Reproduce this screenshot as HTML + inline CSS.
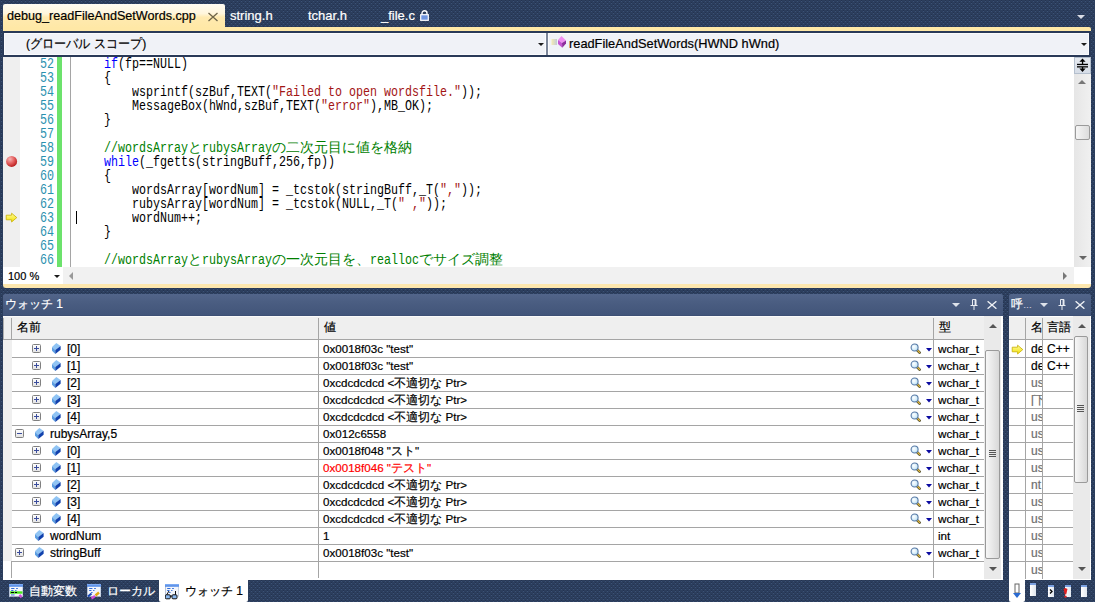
<!DOCTYPE html>
<html><head><meta charset="utf-8"><style>
*{box-sizing:border-box;margin:0;padding:0}
html,body{width:1095px;height:602px;overflow:hidden}
body{position:relative;font-family:"Liberation Sans",sans-serif;font-size:12px;color:#000;
 background-color:#293955;}
.a{position:absolute}
.t{position:absolute;white-space:pre;line-height:1;-webkit-text-stroke:0.2px currentColor}
.code{font-family:"Liberation Mono",monospace;font-size:12.6px;letter-spacing:-0.56px}
.cj{display:inline-block;width:14px;font-family:"Liberation Sans",sans-serif;font-size:12px;letter-spacing:0;text-align:center}
.kw{color:#0000ff}.st{color:#a31515}.cm{color:#008000}
.ln{color:#2b91af}
</style></head><body>
<svg class="a" style="left:0;top:0" width="1095" height="602"><defs><pattern id="dots" width="4" height="4" patternUnits="userSpaceOnUse"><rect width="4" height="4" fill="#2c3e5d"/><rect x="1" y="1" width="1" height="1" fill="#3b5276"/><rect x="3" y="3" width="1" height="1" fill="#3b5276"/><rect x="1" y="0" width="1" height="1" fill="#243350"/><rect x="3" y="2" width="1" height="1" fill="#243350"/></pattern></defs><rect width="1095" height="602" fill="url(#dots)"/></svg>
<div class="a" style="left:3px;top:4px;width:222px;height:24px;border-radius:2px 2px 0 0;background:linear-gradient(#fffcf3 0%,#fff6dc 40%,#ffeab0 55%,#ffe8a6 100%)"></div>
<div class="t" style="left:7px;top:9.6px;font-size:12.6px;color:#000">debug_readFileAndSetWords.cpp</div>
<svg class="a" style="left:207px;top:12px" width="12" height="10" viewBox="0 0 12 10"><path d="M1.5 1 L10.5 9 M10.5 1 L1.5 9" stroke="#6e6448" stroke-width="1.3"/></svg>
<div class="t" style="left:230px;top:9px;font-size:13px;color:#fff">string.h</div>
<div class="t" style="left:308px;top:9px;font-size:13px;color:#fff">tchar.h</div>
<div class="t" style="left:381px;top:9px;font-size:13px;color:#fff">_file.c</div>
<svg class="a" style="left:420px;top:10px" width="9" height="11" viewBox="0 0 9 11"><path d="M2 5 V3.2 A2.5 2.5 0 0 1 7 3.2 V5" fill="none" stroke="#fff" stroke-width="1.4"/><rect x="0.7" y="4.7" width="7.6" height="5.6" fill="#6f95e0" stroke="#fff" stroke-width="1.2"/></svg>
<svg class="a" style="left:1077px;top:15px" width="8" height="4" viewBox="0 0 8 4"><path d="M0 0 H8 L4 4 Z" fill="#d9dde6"/></svg>
<div class="a" style="left:3px;top:27px;width:1088px;height:4px;background:#ffe8a6;border-radius:0 2px 0 0"></div>
<div class="a" style="left:3px;top:31px;width:1088px;height:26px;background:#2a3a58"></div>
<div class="a" style="left:4px;top:33px;width:542px;height:22px;background:#f0f2f7;border:1px solid #fafbfd"></div>
<div class="a" style="left:548px;top:33px;width:541px;height:22px;background:#f0f2f7;border:1px solid #fafbfd"></div>
<div class="a" style="left:546px;top:33px;width:2px;height:22px;background:#7c8699"></div>
<div class="t" style="left:26px;top:36.5px;font-size:13px;color:#000;transform:scaleX(0.93);transform-origin:0 0">(グローバル スコープ)</div>
<svg class="a" style="left:538px;top:43px" width="6" height="3" viewBox="0 0 6 3"><path d="M0 0 H6 L3 3 Z" fill="#1b1b1b"/></svg>
<svg class="a" style="left:1081px;top:43px" width="6" height="3" viewBox="0 0 6 3"><path d="M0 0 H6 L3 3 Z" fill="#1b1b1b"/></svg>
<svg class="a" style="left:550px;top:35px" width="18" height="14" viewBox="0 0 18 14"><defs><linearGradient id="fb" x1="0" x2="1"><stop offset="0" stop-color="#f4ecb4"/><stop offset="1" stop-color="#c4cad6"/></linearGradient></defs><rect x="1.5" y="4" width="5.5" height="6" fill="url(#fb)"/><path d="M11.5 1 L16 5.6 L12 8 L8 5 Z" fill="#f08ef2"/><path d="M8 5 L12 8 L12.3 12.8 L8 8.9 Z" fill="#c453d2"/><path d="M12 8 L16 5.6 L16 8.6 L12.3 12.8 Z" fill="#8b2c9c"/></svg>
<div class="t" style="left:569px;top:38px;font-size:12.8px;color:#000">readFileAndSetWords(HWND hWnd)</div>
<div class="a" style="left:3px;top:57px;width:1071px;height:210px;background:#fff"></div>
<div class="a" style="left:3px;top:57px;width:17px;height:210px;background:#efefef"></div>
<div class="a" style="left:57px;top:57px;width:5px;height:210px;background:#6ce26c"></div>
<div class="a" style="left:70px;top:57px;width:1px;height:210px;background:#a5a5a5"></div>
<div class="t" style="left:40.00px;top:57px;height:14px;font-family:Liberation Mono;font-size:14.5px;transform:scaleX(0.8046);transform-origin:0 0;color:#2b91af;-webkit-text-stroke:0">52</div>
<div class="t" style="left:104px;top:57px;font-family:Liberation Mono;font-size:14.5px;transform:scaleX(0.8046);transform-origin:0 0;color:#0000ff;-webkit-text-stroke:0">if</div>
<div class="t" style="left:118px;top:57px;font-family:Liberation Mono;font-size:14.5px;transform:scaleX(0.8046);transform-origin:0 0;color:#000;-webkit-text-stroke:0">(fp==NULL)</div>
<div class="t" style="left:40.00px;top:71px;height:14px;font-family:Liberation Mono;font-size:14.5px;transform:scaleX(0.8046);transform-origin:0 0;color:#2b91af;-webkit-text-stroke:0">53</div>
<div class="t" style="left:104px;top:71px;font-family:Liberation Mono;font-size:14.5px;transform:scaleX(0.8046);transform-origin:0 0;color:#000;-webkit-text-stroke:0">{</div>
<div class="t" style="left:40.00px;top:85px;height:14px;font-family:Liberation Mono;font-size:14.5px;transform:scaleX(0.8046);transform-origin:0 0;color:#2b91af;-webkit-text-stroke:0">54</div>
<div class="t" style="left:132px;top:85px;font-family:Liberation Mono;font-size:14.5px;transform:scaleX(0.8046);transform-origin:0 0;color:#000;-webkit-text-stroke:0">wsprintf(szBuf,TEXT(</div>
<div class="t" style="left:272px;top:85px;font-family:Liberation Mono;font-size:14.5px;transform:scaleX(0.8046);transform-origin:0 0;color:#a31515;-webkit-text-stroke:0">&quot;Failed to open wordsfile.&quot;</div>
<div class="t" style="left:461px;top:85px;font-family:Liberation Mono;font-size:14.5px;transform:scaleX(0.8046);transform-origin:0 0;color:#000;-webkit-text-stroke:0">));</div>
<div class="t" style="left:40.00px;top:99px;height:14px;font-family:Liberation Mono;font-size:14.5px;transform:scaleX(0.8046);transform-origin:0 0;color:#2b91af;-webkit-text-stroke:0">55</div>
<div class="t" style="left:132px;top:99px;font-family:Liberation Mono;font-size:14.5px;transform:scaleX(0.8046);transform-origin:0 0;color:#000;-webkit-text-stroke:0">MessageBox(hWnd,szBuf,TEXT(</div>
<div class="t" style="left:321px;top:99px;font-family:Liberation Mono;font-size:14.5px;transform:scaleX(0.8046);transform-origin:0 0;color:#a31515;-webkit-text-stroke:0">&quot;error&quot;</div>
<div class="t" style="left:370px;top:99px;font-family:Liberation Mono;font-size:14.5px;transform:scaleX(0.8046);transform-origin:0 0;color:#000;-webkit-text-stroke:0">),MB_OK);</div>
<div class="t" style="left:40.00px;top:113px;height:14px;font-family:Liberation Mono;font-size:14.5px;transform:scaleX(0.8046);transform-origin:0 0;color:#2b91af;-webkit-text-stroke:0">56</div>
<div class="t" style="left:104px;top:113px;font-family:Liberation Mono;font-size:14.5px;transform:scaleX(0.8046);transform-origin:0 0;color:#000;-webkit-text-stroke:0">}</div>
<div class="t" style="left:40.00px;top:127px;height:14px;font-family:Liberation Mono;font-size:14.5px;transform:scaleX(0.8046);transform-origin:0 0;color:#2b91af;-webkit-text-stroke:0">57</div>
<div class="t" style="left:40.00px;top:141px;height:14px;font-family:Liberation Mono;font-size:14.5px;transform:scaleX(0.8046);transform-origin:0 0;color:#2b91af;-webkit-text-stroke:0">58</div>
<div class="t" style="left:104px;top:141px;font-family:Liberation Mono;font-size:14.5px;transform:scaleX(0.8046);transform-origin:0 0;color:#008000;-webkit-text-stroke:0">//wordsArray</div>
<div class="t" style="left:188px;top:141px;width:14px;text-align:center;font-size:13.5px;color:#008000;-webkit-text-stroke:0">と</div>
<div class="t" style="left:202px;top:141px;font-family:Liberation Mono;font-size:14.5px;transform:scaleX(0.8046);transform-origin:0 0;color:#008000;-webkit-text-stroke:0">rubysArray</div>
<div class="t" style="left:272px;top:141px;width:14px;text-align:center;font-size:13.5px;color:#008000;-webkit-text-stroke:0">の</div>
<div class="t" style="left:286px;top:141px;width:14px;text-align:center;font-size:13.5px;color:#008000;-webkit-text-stroke:0">二</div>
<div class="t" style="left:300px;top:141px;width:14px;text-align:center;font-size:13.5px;color:#008000;-webkit-text-stroke:0">次</div>
<div class="t" style="left:314px;top:141px;width:14px;text-align:center;font-size:13.5px;color:#008000;-webkit-text-stroke:0">元</div>
<div class="t" style="left:328px;top:141px;width:14px;text-align:center;font-size:13.5px;color:#008000;-webkit-text-stroke:0">目</div>
<div class="t" style="left:342px;top:141px;width:14px;text-align:center;font-size:13.5px;color:#008000;-webkit-text-stroke:0">に</div>
<div class="t" style="left:356px;top:141px;width:14px;text-align:center;font-size:13.5px;color:#008000;-webkit-text-stroke:0">値</div>
<div class="t" style="left:370px;top:141px;width:14px;text-align:center;font-size:13.5px;color:#008000;-webkit-text-stroke:0">を</div>
<div class="t" style="left:384px;top:141px;width:14px;text-align:center;font-size:13.5px;color:#008000;-webkit-text-stroke:0">格</div>
<div class="t" style="left:398px;top:141px;width:14px;text-align:center;font-size:13.5px;color:#008000;-webkit-text-stroke:0">納</div>
<div class="t" style="left:40.00px;top:155px;height:14px;font-family:Liberation Mono;font-size:14.5px;transform:scaleX(0.8046);transform-origin:0 0;color:#2b91af;-webkit-text-stroke:0">59</div>
<div class="t" style="left:104px;top:155px;font-family:Liberation Mono;font-size:14.5px;transform:scaleX(0.8046);transform-origin:0 0;color:#0000ff;-webkit-text-stroke:0">while</div>
<div class="t" style="left:139px;top:155px;font-family:Liberation Mono;font-size:14.5px;transform:scaleX(0.8046);transform-origin:0 0;color:#000;-webkit-text-stroke:0">(_fgetts(stringBuff,256,fp))</div>
<div class="t" style="left:40.00px;top:169px;height:14px;font-family:Liberation Mono;font-size:14.5px;transform:scaleX(0.8046);transform-origin:0 0;color:#2b91af;-webkit-text-stroke:0">60</div>
<div class="t" style="left:104px;top:169px;font-family:Liberation Mono;font-size:14.5px;transform:scaleX(0.8046);transform-origin:0 0;color:#000;-webkit-text-stroke:0">{</div>
<div class="t" style="left:40.00px;top:183px;height:14px;font-family:Liberation Mono;font-size:14.5px;transform:scaleX(0.8046);transform-origin:0 0;color:#2b91af;-webkit-text-stroke:0">61</div>
<div class="t" style="left:132px;top:183px;font-family:Liberation Mono;font-size:14.5px;transform:scaleX(0.8046);transform-origin:0 0;color:#000;-webkit-text-stroke:0">wordsArray[wordNum] = _tcstok(stringBuff,_T(</div>
<div class="t" style="left:440px;top:183px;font-family:Liberation Mono;font-size:14.5px;transform:scaleX(0.8046);transform-origin:0 0;color:#a31515;-webkit-text-stroke:0">&quot;,&quot;</div>
<div class="t" style="left:461px;top:183px;font-family:Liberation Mono;font-size:14.5px;transform:scaleX(0.8046);transform-origin:0 0;color:#000;-webkit-text-stroke:0">));</div>
<div class="t" style="left:40.00px;top:197px;height:14px;font-family:Liberation Mono;font-size:14.5px;transform:scaleX(0.8046);transform-origin:0 0;color:#2b91af;-webkit-text-stroke:0">62</div>
<div class="t" style="left:132px;top:197px;font-family:Liberation Mono;font-size:14.5px;transform:scaleX(0.8046);transform-origin:0 0;color:#000;-webkit-text-stroke:0">rubysArray[wordNum] = _tcstok(NULL,_T(</div>
<div class="t" style="left:398px;top:197px;font-family:Liberation Mono;font-size:14.5px;transform:scaleX(0.8046);transform-origin:0 0;color:#a31515;-webkit-text-stroke:0">&quot; ,&quot;</div>
<div class="t" style="left:426px;top:197px;font-family:Liberation Mono;font-size:14.5px;transform:scaleX(0.8046);transform-origin:0 0;color:#000;-webkit-text-stroke:0">));</div>
<div class="t" style="left:40.00px;top:211px;height:14px;font-family:Liberation Mono;font-size:14.5px;transform:scaleX(0.8046);transform-origin:0 0;color:#2b91af;-webkit-text-stroke:0">63</div>
<div class="t" style="left:132px;top:211px;font-family:Liberation Mono;font-size:14.5px;transform:scaleX(0.8046);transform-origin:0 0;color:#000;-webkit-text-stroke:0">wordNum++;</div>
<div class="t" style="left:40.00px;top:225px;height:14px;font-family:Liberation Mono;font-size:14.5px;transform:scaleX(0.8046);transform-origin:0 0;color:#2b91af;-webkit-text-stroke:0">64</div>
<div class="t" style="left:104px;top:225px;font-family:Liberation Mono;font-size:14.5px;transform:scaleX(0.8046);transform-origin:0 0;color:#000;-webkit-text-stroke:0">}</div>
<div class="t" style="left:40.00px;top:239px;height:14px;font-family:Liberation Mono;font-size:14.5px;transform:scaleX(0.8046);transform-origin:0 0;color:#2b91af;-webkit-text-stroke:0">65</div>
<div class="t" style="left:40.00px;top:253px;height:14px;font-family:Liberation Mono;font-size:14.5px;transform:scaleX(0.8046);transform-origin:0 0;color:#2b91af;-webkit-text-stroke:0">66</div>
<div class="t" style="left:104px;top:253px;font-family:Liberation Mono;font-size:14.5px;transform:scaleX(0.8046);transform-origin:0 0;color:#008000;-webkit-text-stroke:0">//wordsArray</div>
<div class="t" style="left:188px;top:253px;width:14px;text-align:center;font-size:13.5px;color:#008000;-webkit-text-stroke:0">と</div>
<div class="t" style="left:202px;top:253px;font-family:Liberation Mono;font-size:14.5px;transform:scaleX(0.8046);transform-origin:0 0;color:#008000;-webkit-text-stroke:0">rubysArray</div>
<div class="t" style="left:272px;top:253px;width:14px;text-align:center;font-size:13.5px;color:#008000;-webkit-text-stroke:0">の</div>
<div class="t" style="left:286px;top:253px;width:14px;text-align:center;font-size:13.5px;color:#008000;-webkit-text-stroke:0">一</div>
<div class="t" style="left:300px;top:253px;width:14px;text-align:center;font-size:13.5px;color:#008000;-webkit-text-stroke:0">次</div>
<div class="t" style="left:314px;top:253px;width:14px;text-align:center;font-size:13.5px;color:#008000;-webkit-text-stroke:0">元</div>
<div class="t" style="left:328px;top:253px;width:14px;text-align:center;font-size:13.5px;color:#008000;-webkit-text-stroke:0">目</div>
<div class="t" style="left:342px;top:253px;width:14px;text-align:center;font-size:13.5px;color:#008000;-webkit-text-stroke:0">を</div>
<div class="t" style="left:356px;top:253px;width:14px;text-align:center;font-size:13.5px;color:#008000;-webkit-text-stroke:0">、</div>
<div class="t" style="left:370px;top:253px;font-family:Liberation Mono;font-size:14.5px;transform:scaleX(0.8046);transform-origin:0 0;color:#008000;-webkit-text-stroke:0">realloc</div>
<div class="t" style="left:419px;top:253px;width:14px;text-align:center;font-size:13.5px;color:#008000;-webkit-text-stroke:0">で</div>
<div class="t" style="left:433px;top:253px;width:14px;text-align:center;font-size:13.5px;color:#008000;-webkit-text-stroke:0">サ</div>
<div class="t" style="left:447px;top:253px;width:14px;text-align:center;font-size:13.5px;color:#008000;-webkit-text-stroke:0">イ</div>
<div class="t" style="left:461px;top:253px;width:14px;text-align:center;font-size:13.5px;color:#008000;-webkit-text-stroke:0">ズ</div>
<div class="t" style="left:475px;top:253px;width:14px;text-align:center;font-size:13.5px;color:#008000;-webkit-text-stroke:0">調</div>
<div class="t" style="left:489px;top:253px;width:14px;text-align:center;font-size:13.5px;color:#008000;-webkit-text-stroke:0">整</div>
<svg class="a" style="left:5px;top:155px" width="13" height="13" viewBox="0 0 13 13"><defs><radialGradient id="bp" cx="0.35" cy="0.3" r="0.75"><stop offset="0" stop-color="#f6b4b4"/><stop offset="0.55" stop-color="#e25a5a"/><stop offset="1" stop-color="#b51c1c"/></radialGradient></defs><circle cx="6.6" cy="6.4" r="5.5" fill="url(#bp)"/></svg>
<svg class="a" style="left:5px;top:211px" width="13" height="12" viewBox="0 0 13 12"><defs><linearGradient id="ar" x1="0" y1="0" x2="0" y2="1"><stop offset="0" stop-color="#fffca0"/><stop offset="1" stop-color="#f2e000"/></linearGradient></defs><path d="M1.2 4.2 H6.6 V2.2 L11.8 6.6 L6.6 11 V8.8 H1.2 Z" fill="url(#ar)" stroke="#c8b000" stroke-width="0.8" stroke-linejoin="round"/></svg>
<div class="a" style="left:76px;top:211px;width:1px;height:13px;background:#000"></div>
<div class="a" style="left:1074px;top:57px;width:17px;height:210px;background:linear-gradient(90deg,#e6e6e6,#f0f0f0)"></div>
<svg class="a" style="left:1079px;top:256px" width="8" height="4" viewBox="0 0 8 4"><path d="M0 0 H8 L4 4 Z" fill="#666"/></svg>
<div class="a" style="left:1074px;top:57px;width:17px;height:17px;background:linear-gradient(#e6eaf0,#d6dde7);border:1px solid #b4bfcd"></div>
<svg class="a" style="left:1075px;top:58px" width="15" height="15" viewBox="0 0 15 15"><path d="M7.5 0.6 L10.6 3.8 H4.4 Z M7.5 14 L10.6 10.6 H4.4 Z" fill="#000"/><rect x="2" y="5.8" width="11" height="1.3" fill="#000"/><rect x="2" y="8.2" width="11" height="1.3" fill="#000"/><rect x="6.9" y="3" width="1.3" height="3" fill="#000"/><rect x="6.9" y="9" width="1.3" height="2.5" fill="#000"/></svg>
<svg class="a" style="left:1078px;top:80px" width="8" height="4" viewBox="0 0 8 4"><path d="M4 0 L8 4 H0 Z" fill="#777"/></svg>
<div class="a" style="left:1075px;top:125px;width:15px;height:15px;border:1px solid #9a9a9a;border-radius:2px;background:linear-gradient(90deg,#f5f5f5,#dcdcdc)"></div>
<div class="a" style="left:3px;top:267px;width:1071px;height:17px;background:#f1f1f1"></div>
<div class="a" style="left:3px;top:267px;width:60px;height:17px;background:#fff"></div>
<div class="t" style="left:8px;top:271px;font-size:11px">100 %</div>
<svg class="a" style="left:54px;top:275px" width="6" height="3" viewBox="0 0 6 3"><path d="M0 0 H6 L3 3 Z" fill="#1b1b1b"/></svg>
<svg class="a" style="left:69px;top:272px" width="4" height="8" viewBox="0 0 4 8"><path d="M4 0 V8 L0 4 Z" fill="#999"/></svg>
<svg class="a" style="left:1063px;top:272px" width="4" height="8" viewBox="0 0 4 8"><path d="M0 0 V8 L4 4 Z" fill="#777"/></svg>
<div class="a" style="left:1074px;top:267px;width:17px;height:17px;background:#fff"></div>
<div class="a" style="left:3px;top:284px;width:1088px;height:4px;background:#fde7ae;border-radius:0 0 3px 3px"></div>
<div class="a" style="left:3px;top:294px;width:1000px;height:22px;border-radius:2px 2px 0 0;background:linear-gradient(#52658a 0%,#4a5d81 40%,#42557a 95%,#3a4c70 100%)"></div>
<div class="t" style="left:5px;top:298px;font-size:12px;color:#fff">ウォッチ 1</div>
<svg class="a" style="left:952px;top:303px" width="8" height="4" viewBox="0 0 8 4"><path d="M0 0 H8 L4 4 Z" fill="#dde2ea"/></svg>
<svg class="a" style="left:970px;top:299px" width="8" height="11" viewBox="0 0 8 11"><path d="M2.5 0.5 H6 V6 M2.5 0.5 V6" fill="none" stroke="#e8ecf2" stroke-width="1"/><rect x="4.6" y="0.5" width="1.4" height="5.5" fill="#e8ecf2"/><rect x="0.5" y="6" width="7" height="1" fill="#e8ecf2"/><rect x="3.5" y="7" width="1" height="4" fill="#e8ecf2"/></svg>
<svg class="a" style="left:987px;top:301px" width="10" height="8" viewBox="0 0 10 8"><path d="M0.6 0.3 L9.4 7.7 M9.4 0.3 L0.6 7.7" stroke="#eef1f5" stroke-width="1.4"/></svg>
<div class="a" style="left:3px;top:316px;width:1000px;height:264px;background:#fff"></div>
<div class="a" style="left:3px;top:317px;width:981px;height:23px;background:#efefef;border-bottom:1px solid #a5a5a5"></div>
<div class="a" style="left:3px;top:316px;width:981px;height:1px;background:#fafafa"></div>
<div class="a" style="left:11px;top:318px;width:1px;height:21px;background:#a5a5a5"></div>
<div class="a" style="left:3px;top:318px;width:1px;height:21px;background:#b0b0b0"></div>
<div class="a" style="left:318px;top:318px;width:1px;height:21px;background:#a5a5a5"></div>
<div class="a" style="left:933px;top:318px;width:1px;height:21px;background:#a5a5a5"></div>
<div class="t" style="left:17px;top:321px;font-size:12px">名前</div>
<div class="t" style="left:324px;top:321px;font-size:12px">値</div>
<div class="t" style="left:939px;top:321px;font-size:12px">型</div>
<div class="a" style="left:3px;top:340px;width:9px;height:17px;background:#efefef"></div>
<div class="a" style="left:12px;top:357px;width:972px;height:1px;background:#a5a5a5"></div>
<svg class="a" style="left:32px;top:344px" width="9" height="9" viewBox="0 0 9 9"><defs><linearGradient id="bg32_344" x1="0" y1="0" x2="0" y2="1"><stop offset="0" stop-color="#ffffff"/><stop offset="1" stop-color="#e2e2e2"/></linearGradient></defs><rect x="0.5" y="0.5" width="8" height="8" rx="1" fill="url(#bg32_344)" stroke="#808080"/><rect x="2" y="4" width="5" height="1" fill="#3a4c9c"/><rect x="4" y="2" width="1" height="5" fill="#3a4c9c"/></svg>
<svg class="a" style="left:52px;top:343px" width="9" height="11" viewBox="0 0 9 11"><path d="M4.3 0 L8.6 3 L3.3 7 L0 4 Z" fill="#90c4f4"/><path d="M0 4 L3.3 7 L3.3 11 L0 7.8 Z" fill="#5b9ee2"/><path d="M3.3 7 L8.6 3 L8.6 6.8 L3.3 11 Z" fill="#1041ad"/></svg>
<div class="t" style="left:67px;top:343px;font-size:12px">[0]</div>
<div class="t" style="left:323px;top:343px;font-size:11.6px;color:#000">0x0018f03c &quot;test&quot;</div>
<svg class="a" style="left:910px;top:343px" width="11" height="11" viewBox="0 0 11 11"><defs><radialGradient id="lg" cx="0.4" cy="0.4" r="0.6"><stop offset="0" stop-color="#ffffff"/><stop offset="1" stop-color="#bfe4f8"/></radialGradient></defs><path d="M6.6 6.6 L9.6 9.6" stroke="#3a3a20" stroke-width="2.6" stroke-linecap="round"/><path d="M6.6 6.6 L9.6 9.6" stroke="#e0b840" stroke-width="1.4" stroke-linecap="round"/><circle cx="4.6" cy="4.5" r="3.5" fill="url(#lg)" stroke="#587aa6" stroke-width="1.1"/></svg>
<svg class="a" style="left:926px;top:348px" width="6" height="4" viewBox="0 0 6 4"><path d="M0 0 H6 L3 3.5 Z" fill="#0a0aa0"/></svg>
<div class="t" style="left:938px;top:343px;font-size:11.7px;width:46px;overflow:hidden">wchar_t</div>
<div class="a" style="left:3px;top:357px;width:9px;height:17px;background:#efefef"></div>
<div class="a" style="left:12px;top:374px;width:972px;height:1px;background:#a5a5a5"></div>
<svg class="a" style="left:32px;top:361px" width="9" height="9" viewBox="0 0 9 9"><defs><linearGradient id="bg32_361" x1="0" y1="0" x2="0" y2="1"><stop offset="0" stop-color="#ffffff"/><stop offset="1" stop-color="#e2e2e2"/></linearGradient></defs><rect x="0.5" y="0.5" width="8" height="8" rx="1" fill="url(#bg32_361)" stroke="#808080"/><rect x="2" y="4" width="5" height="1" fill="#3a4c9c"/><rect x="4" y="2" width="1" height="5" fill="#3a4c9c"/></svg>
<svg class="a" style="left:52px;top:360px" width="9" height="11" viewBox="0 0 9 11"><path d="M4.3 0 L8.6 3 L3.3 7 L0 4 Z" fill="#90c4f4"/><path d="M0 4 L3.3 7 L3.3 11 L0 7.8 Z" fill="#5b9ee2"/><path d="M3.3 7 L8.6 3 L8.6 6.8 L3.3 11 Z" fill="#1041ad"/></svg>
<div class="t" style="left:67px;top:360px;font-size:12px">[1]</div>
<div class="t" style="left:323px;top:360px;font-size:11.6px;color:#000">0x0018f03c &quot;test&quot;</div>
<svg class="a" style="left:910px;top:360px" width="11" height="11" viewBox="0 0 11 11"><defs><radialGradient id="lg" cx="0.4" cy="0.4" r="0.6"><stop offset="0" stop-color="#ffffff"/><stop offset="1" stop-color="#bfe4f8"/></radialGradient></defs><path d="M6.6 6.6 L9.6 9.6" stroke="#3a3a20" stroke-width="2.6" stroke-linecap="round"/><path d="M6.6 6.6 L9.6 9.6" stroke="#e0b840" stroke-width="1.4" stroke-linecap="round"/><circle cx="4.6" cy="4.5" r="3.5" fill="url(#lg)" stroke="#587aa6" stroke-width="1.1"/></svg>
<svg class="a" style="left:926px;top:365px" width="6" height="4" viewBox="0 0 6 4"><path d="M0 0 H6 L3 3.5 Z" fill="#0a0aa0"/></svg>
<div class="t" style="left:938px;top:360px;font-size:11.7px;width:46px;overflow:hidden">wchar_t</div>
<div class="a" style="left:3px;top:374px;width:9px;height:17px;background:#efefef"></div>
<div class="a" style="left:12px;top:391px;width:972px;height:1px;background:#a5a5a5"></div>
<svg class="a" style="left:32px;top:378px" width="9" height="9" viewBox="0 0 9 9"><defs><linearGradient id="bg32_378" x1="0" y1="0" x2="0" y2="1"><stop offset="0" stop-color="#ffffff"/><stop offset="1" stop-color="#e2e2e2"/></linearGradient></defs><rect x="0.5" y="0.5" width="8" height="8" rx="1" fill="url(#bg32_378)" stroke="#808080"/><rect x="2" y="4" width="5" height="1" fill="#3a4c9c"/><rect x="4" y="2" width="1" height="5" fill="#3a4c9c"/></svg>
<svg class="a" style="left:52px;top:377px" width="9" height="11" viewBox="0 0 9 11"><path d="M4.3 0 L8.6 3 L3.3 7 L0 4 Z" fill="#90c4f4"/><path d="M0 4 L3.3 7 L3.3 11 L0 7.8 Z" fill="#5b9ee2"/><path d="M3.3 7 L8.6 3 L8.6 6.8 L3.3 11 Z" fill="#1041ad"/></svg>
<div class="t" style="left:67px;top:377px;font-size:12px">[2]</div>
<div class="t" style="left:323px;top:377px;font-size:11.6px;color:#000">0xcdcdcdcd &lt;不適切な Ptr&gt;</div>
<svg class="a" style="left:910px;top:377px" width="11" height="11" viewBox="0 0 11 11"><defs><radialGradient id="lg" cx="0.4" cy="0.4" r="0.6"><stop offset="0" stop-color="#ffffff"/><stop offset="1" stop-color="#bfe4f8"/></radialGradient></defs><path d="M6.6 6.6 L9.6 9.6" stroke="#3a3a20" stroke-width="2.6" stroke-linecap="round"/><path d="M6.6 6.6 L9.6 9.6" stroke="#e0b840" stroke-width="1.4" stroke-linecap="round"/><circle cx="4.6" cy="4.5" r="3.5" fill="url(#lg)" stroke="#587aa6" stroke-width="1.1"/></svg>
<svg class="a" style="left:926px;top:382px" width="6" height="4" viewBox="0 0 6 4"><path d="M0 0 H6 L3 3.5 Z" fill="#0a0aa0"/></svg>
<div class="t" style="left:938px;top:377px;font-size:11.7px;width:46px;overflow:hidden">wchar_t</div>
<div class="a" style="left:3px;top:391px;width:9px;height:17px;background:#efefef"></div>
<div class="a" style="left:12px;top:408px;width:972px;height:1px;background:#a5a5a5"></div>
<svg class="a" style="left:32px;top:395px" width="9" height="9" viewBox="0 0 9 9"><defs><linearGradient id="bg32_395" x1="0" y1="0" x2="0" y2="1"><stop offset="0" stop-color="#ffffff"/><stop offset="1" stop-color="#e2e2e2"/></linearGradient></defs><rect x="0.5" y="0.5" width="8" height="8" rx="1" fill="url(#bg32_395)" stroke="#808080"/><rect x="2" y="4" width="5" height="1" fill="#3a4c9c"/><rect x="4" y="2" width="1" height="5" fill="#3a4c9c"/></svg>
<svg class="a" style="left:52px;top:394px" width="9" height="11" viewBox="0 0 9 11"><path d="M4.3 0 L8.6 3 L3.3 7 L0 4 Z" fill="#90c4f4"/><path d="M0 4 L3.3 7 L3.3 11 L0 7.8 Z" fill="#5b9ee2"/><path d="M3.3 7 L8.6 3 L8.6 6.8 L3.3 11 Z" fill="#1041ad"/></svg>
<div class="t" style="left:67px;top:394px;font-size:12px">[3]</div>
<div class="t" style="left:323px;top:394px;font-size:11.6px;color:#000">0xcdcdcdcd &lt;不適切な Ptr&gt;</div>
<svg class="a" style="left:910px;top:394px" width="11" height="11" viewBox="0 0 11 11"><defs><radialGradient id="lg" cx="0.4" cy="0.4" r="0.6"><stop offset="0" stop-color="#ffffff"/><stop offset="1" stop-color="#bfe4f8"/></radialGradient></defs><path d="M6.6 6.6 L9.6 9.6" stroke="#3a3a20" stroke-width="2.6" stroke-linecap="round"/><path d="M6.6 6.6 L9.6 9.6" stroke="#e0b840" stroke-width="1.4" stroke-linecap="round"/><circle cx="4.6" cy="4.5" r="3.5" fill="url(#lg)" stroke="#587aa6" stroke-width="1.1"/></svg>
<svg class="a" style="left:926px;top:399px" width="6" height="4" viewBox="0 0 6 4"><path d="M0 0 H6 L3 3.5 Z" fill="#0a0aa0"/></svg>
<div class="t" style="left:938px;top:394px;font-size:11.7px;width:46px;overflow:hidden">wchar_t</div>
<div class="a" style="left:3px;top:408px;width:9px;height:17px;background:#efefef"></div>
<div class="a" style="left:12px;top:425px;width:972px;height:1px;background:#a5a5a5"></div>
<svg class="a" style="left:32px;top:412px" width="9" height="9" viewBox="0 0 9 9"><defs><linearGradient id="bg32_412" x1="0" y1="0" x2="0" y2="1"><stop offset="0" stop-color="#ffffff"/><stop offset="1" stop-color="#e2e2e2"/></linearGradient></defs><rect x="0.5" y="0.5" width="8" height="8" rx="1" fill="url(#bg32_412)" stroke="#808080"/><rect x="2" y="4" width="5" height="1" fill="#3a4c9c"/><rect x="4" y="2" width="1" height="5" fill="#3a4c9c"/></svg>
<svg class="a" style="left:52px;top:411px" width="9" height="11" viewBox="0 0 9 11"><path d="M4.3 0 L8.6 3 L3.3 7 L0 4 Z" fill="#90c4f4"/><path d="M0 4 L3.3 7 L3.3 11 L0 7.8 Z" fill="#5b9ee2"/><path d="M3.3 7 L8.6 3 L8.6 6.8 L3.3 11 Z" fill="#1041ad"/></svg>
<div class="t" style="left:67px;top:411px;font-size:12px">[4]</div>
<div class="t" style="left:323px;top:411px;font-size:11.6px;color:#000">0xcdcdcdcd &lt;不適切な Ptr&gt;</div>
<svg class="a" style="left:910px;top:411px" width="11" height="11" viewBox="0 0 11 11"><defs><radialGradient id="lg" cx="0.4" cy="0.4" r="0.6"><stop offset="0" stop-color="#ffffff"/><stop offset="1" stop-color="#bfe4f8"/></radialGradient></defs><path d="M6.6 6.6 L9.6 9.6" stroke="#3a3a20" stroke-width="2.6" stroke-linecap="round"/><path d="M6.6 6.6 L9.6 9.6" stroke="#e0b840" stroke-width="1.4" stroke-linecap="round"/><circle cx="4.6" cy="4.5" r="3.5" fill="url(#lg)" stroke="#587aa6" stroke-width="1.1"/></svg>
<svg class="a" style="left:926px;top:416px" width="6" height="4" viewBox="0 0 6 4"><path d="M0 0 H6 L3 3.5 Z" fill="#0a0aa0"/></svg>
<div class="t" style="left:938px;top:411px;font-size:11.7px;width:46px;overflow:hidden">wchar_t</div>
<div class="a" style="left:3px;top:425px;width:9px;height:17px;background:#efefef"></div>
<div class="a" style="left:12px;top:442px;width:972px;height:1px;background:#a5a5a5"></div>
<svg class="a" style="left:15px;top:429px" width="9" height="9" viewBox="0 0 9 9"><defs><linearGradient id="bg15_429" x1="0" y1="0" x2="0" y2="1"><stop offset="0" stop-color="#ffffff"/><stop offset="1" stop-color="#e2e2e2"/></linearGradient></defs><rect x="0.5" y="0.5" width="8" height="8" rx="1" fill="url(#bg15_429)" stroke="#808080"/><rect x="2" y="4" width="5" height="1" fill="#3a4c9c"/></svg>
<svg class="a" style="left:35px;top:428px" width="9" height="11" viewBox="0 0 9 11"><path d="M4.3 0 L8.6 3 L3.3 7 L0 4 Z" fill="#90c4f4"/><path d="M0 4 L3.3 7 L3.3 11 L0 7.8 Z" fill="#5b9ee2"/><path d="M3.3 7 L8.6 3 L8.6 6.8 L3.3 11 Z" fill="#1041ad"/></svg>
<div class="t" style="left:50px;top:428px;font-size:12px">rubysArray,5</div>
<div class="t" style="left:323px;top:428px;font-size:11.6px;color:#000">0x012c6558</div>
<div class="t" style="left:938px;top:428px;font-size:11.7px;width:46px;overflow:hidden">wchar_t</div>
<div class="a" style="left:3px;top:442px;width:9px;height:17px;background:#efefef"></div>
<div class="a" style="left:12px;top:459px;width:972px;height:1px;background:#a5a5a5"></div>
<svg class="a" style="left:32px;top:446px" width="9" height="9" viewBox="0 0 9 9"><defs><linearGradient id="bg32_446" x1="0" y1="0" x2="0" y2="1"><stop offset="0" stop-color="#ffffff"/><stop offset="1" stop-color="#e2e2e2"/></linearGradient></defs><rect x="0.5" y="0.5" width="8" height="8" rx="1" fill="url(#bg32_446)" stroke="#808080"/><rect x="2" y="4" width="5" height="1" fill="#3a4c9c"/><rect x="4" y="2" width="1" height="5" fill="#3a4c9c"/></svg>
<svg class="a" style="left:52px;top:445px" width="9" height="11" viewBox="0 0 9 11"><path d="M4.3 0 L8.6 3 L3.3 7 L0 4 Z" fill="#90c4f4"/><path d="M0 4 L3.3 7 L3.3 11 L0 7.8 Z" fill="#5b9ee2"/><path d="M3.3 7 L8.6 3 L8.6 6.8 L3.3 11 Z" fill="#1041ad"/></svg>
<div class="t" style="left:67px;top:445px;font-size:12px">[0]</div>
<div class="t" style="left:323px;top:445px;font-size:11.6px;color:#000">0x0018f048 &quot;スト&quot;</div>
<svg class="a" style="left:910px;top:445px" width="11" height="11" viewBox="0 0 11 11"><defs><radialGradient id="lg" cx="0.4" cy="0.4" r="0.6"><stop offset="0" stop-color="#ffffff"/><stop offset="1" stop-color="#bfe4f8"/></radialGradient></defs><path d="M6.6 6.6 L9.6 9.6" stroke="#3a3a20" stroke-width="2.6" stroke-linecap="round"/><path d="M6.6 6.6 L9.6 9.6" stroke="#e0b840" stroke-width="1.4" stroke-linecap="round"/><circle cx="4.6" cy="4.5" r="3.5" fill="url(#lg)" stroke="#587aa6" stroke-width="1.1"/></svg>
<svg class="a" style="left:926px;top:450px" width="6" height="4" viewBox="0 0 6 4"><path d="M0 0 H6 L3 3.5 Z" fill="#0a0aa0"/></svg>
<div class="t" style="left:938px;top:445px;font-size:11.7px;width:46px;overflow:hidden">wchar_t</div>
<div class="a" style="left:3px;top:459px;width:9px;height:17px;background:#efefef"></div>
<div class="a" style="left:12px;top:476px;width:972px;height:1px;background:#a5a5a5"></div>
<svg class="a" style="left:32px;top:463px" width="9" height="9" viewBox="0 0 9 9"><defs><linearGradient id="bg32_463" x1="0" y1="0" x2="0" y2="1"><stop offset="0" stop-color="#ffffff"/><stop offset="1" stop-color="#e2e2e2"/></linearGradient></defs><rect x="0.5" y="0.5" width="8" height="8" rx="1" fill="url(#bg32_463)" stroke="#808080"/><rect x="2" y="4" width="5" height="1" fill="#3a4c9c"/><rect x="4" y="2" width="1" height="5" fill="#3a4c9c"/></svg>
<svg class="a" style="left:52px;top:462px" width="9" height="11" viewBox="0 0 9 11"><path d="M4.3 0 L8.6 3 L3.3 7 L0 4 Z" fill="#90c4f4"/><path d="M0 4 L3.3 7 L3.3 11 L0 7.8 Z" fill="#5b9ee2"/><path d="M3.3 7 L8.6 3 L8.6 6.8 L3.3 11 Z" fill="#1041ad"/></svg>
<div class="t" style="left:67px;top:462px;font-size:12px">[1]</div>
<div class="t" style="left:323px;top:462px;font-size:11.6px;color:#ff0000">0x0018f046 &quot;テスト&quot;</div>
<svg class="a" style="left:910px;top:462px" width="11" height="11" viewBox="0 0 11 11"><defs><radialGradient id="lg" cx="0.4" cy="0.4" r="0.6"><stop offset="0" stop-color="#ffffff"/><stop offset="1" stop-color="#bfe4f8"/></radialGradient></defs><path d="M6.6 6.6 L9.6 9.6" stroke="#3a3a20" stroke-width="2.6" stroke-linecap="round"/><path d="M6.6 6.6 L9.6 9.6" stroke="#e0b840" stroke-width="1.4" stroke-linecap="round"/><circle cx="4.6" cy="4.5" r="3.5" fill="url(#lg)" stroke="#587aa6" stroke-width="1.1"/></svg>
<svg class="a" style="left:926px;top:467px" width="6" height="4" viewBox="0 0 6 4"><path d="M0 0 H6 L3 3.5 Z" fill="#0a0aa0"/></svg>
<div class="t" style="left:938px;top:462px;font-size:11.7px;width:46px;overflow:hidden">wchar_t</div>
<div class="a" style="left:3px;top:476px;width:9px;height:17px;background:#efefef"></div>
<div class="a" style="left:12px;top:493px;width:972px;height:1px;background:#a5a5a5"></div>
<svg class="a" style="left:32px;top:480px" width="9" height="9" viewBox="0 0 9 9"><defs><linearGradient id="bg32_480" x1="0" y1="0" x2="0" y2="1"><stop offset="0" stop-color="#ffffff"/><stop offset="1" stop-color="#e2e2e2"/></linearGradient></defs><rect x="0.5" y="0.5" width="8" height="8" rx="1" fill="url(#bg32_480)" stroke="#808080"/><rect x="2" y="4" width="5" height="1" fill="#3a4c9c"/><rect x="4" y="2" width="1" height="5" fill="#3a4c9c"/></svg>
<svg class="a" style="left:52px;top:479px" width="9" height="11" viewBox="0 0 9 11"><path d="M4.3 0 L8.6 3 L3.3 7 L0 4 Z" fill="#90c4f4"/><path d="M0 4 L3.3 7 L3.3 11 L0 7.8 Z" fill="#5b9ee2"/><path d="M3.3 7 L8.6 3 L8.6 6.8 L3.3 11 Z" fill="#1041ad"/></svg>
<div class="t" style="left:67px;top:479px;font-size:12px">[2]</div>
<div class="t" style="left:323px;top:479px;font-size:11.6px;color:#000">0xcdcdcdcd &lt;不適切な Ptr&gt;</div>
<svg class="a" style="left:910px;top:479px" width="11" height="11" viewBox="0 0 11 11"><defs><radialGradient id="lg" cx="0.4" cy="0.4" r="0.6"><stop offset="0" stop-color="#ffffff"/><stop offset="1" stop-color="#bfe4f8"/></radialGradient></defs><path d="M6.6 6.6 L9.6 9.6" stroke="#3a3a20" stroke-width="2.6" stroke-linecap="round"/><path d="M6.6 6.6 L9.6 9.6" stroke="#e0b840" stroke-width="1.4" stroke-linecap="round"/><circle cx="4.6" cy="4.5" r="3.5" fill="url(#lg)" stroke="#587aa6" stroke-width="1.1"/></svg>
<svg class="a" style="left:926px;top:484px" width="6" height="4" viewBox="0 0 6 4"><path d="M0 0 H6 L3 3.5 Z" fill="#0a0aa0"/></svg>
<div class="t" style="left:938px;top:479px;font-size:11.7px;width:46px;overflow:hidden">wchar_t</div>
<div class="a" style="left:3px;top:493px;width:9px;height:17px;background:#efefef"></div>
<div class="a" style="left:12px;top:510px;width:972px;height:1px;background:#a5a5a5"></div>
<svg class="a" style="left:32px;top:497px" width="9" height="9" viewBox="0 0 9 9"><defs><linearGradient id="bg32_497" x1="0" y1="0" x2="0" y2="1"><stop offset="0" stop-color="#ffffff"/><stop offset="1" stop-color="#e2e2e2"/></linearGradient></defs><rect x="0.5" y="0.5" width="8" height="8" rx="1" fill="url(#bg32_497)" stroke="#808080"/><rect x="2" y="4" width="5" height="1" fill="#3a4c9c"/><rect x="4" y="2" width="1" height="5" fill="#3a4c9c"/></svg>
<svg class="a" style="left:52px;top:496px" width="9" height="11" viewBox="0 0 9 11"><path d="M4.3 0 L8.6 3 L3.3 7 L0 4 Z" fill="#90c4f4"/><path d="M0 4 L3.3 7 L3.3 11 L0 7.8 Z" fill="#5b9ee2"/><path d="M3.3 7 L8.6 3 L8.6 6.8 L3.3 11 Z" fill="#1041ad"/></svg>
<div class="t" style="left:67px;top:496px;font-size:12px">[3]</div>
<div class="t" style="left:323px;top:496px;font-size:11.6px;color:#000">0xcdcdcdcd &lt;不適切な Ptr&gt;</div>
<svg class="a" style="left:910px;top:496px" width="11" height="11" viewBox="0 0 11 11"><defs><radialGradient id="lg" cx="0.4" cy="0.4" r="0.6"><stop offset="0" stop-color="#ffffff"/><stop offset="1" stop-color="#bfe4f8"/></radialGradient></defs><path d="M6.6 6.6 L9.6 9.6" stroke="#3a3a20" stroke-width="2.6" stroke-linecap="round"/><path d="M6.6 6.6 L9.6 9.6" stroke="#e0b840" stroke-width="1.4" stroke-linecap="round"/><circle cx="4.6" cy="4.5" r="3.5" fill="url(#lg)" stroke="#587aa6" stroke-width="1.1"/></svg>
<svg class="a" style="left:926px;top:501px" width="6" height="4" viewBox="0 0 6 4"><path d="M0 0 H6 L3 3.5 Z" fill="#0a0aa0"/></svg>
<div class="t" style="left:938px;top:496px;font-size:11.7px;width:46px;overflow:hidden">wchar_t</div>
<div class="a" style="left:3px;top:510px;width:9px;height:17px;background:#efefef"></div>
<div class="a" style="left:12px;top:527px;width:972px;height:1px;background:#a5a5a5"></div>
<svg class="a" style="left:32px;top:514px" width="9" height="9" viewBox="0 0 9 9"><defs><linearGradient id="bg32_514" x1="0" y1="0" x2="0" y2="1"><stop offset="0" stop-color="#ffffff"/><stop offset="1" stop-color="#e2e2e2"/></linearGradient></defs><rect x="0.5" y="0.5" width="8" height="8" rx="1" fill="url(#bg32_514)" stroke="#808080"/><rect x="2" y="4" width="5" height="1" fill="#3a4c9c"/><rect x="4" y="2" width="1" height="5" fill="#3a4c9c"/></svg>
<svg class="a" style="left:52px;top:513px" width="9" height="11" viewBox="0 0 9 11"><path d="M4.3 0 L8.6 3 L3.3 7 L0 4 Z" fill="#90c4f4"/><path d="M0 4 L3.3 7 L3.3 11 L0 7.8 Z" fill="#5b9ee2"/><path d="M3.3 7 L8.6 3 L8.6 6.8 L3.3 11 Z" fill="#1041ad"/></svg>
<div class="t" style="left:67px;top:513px;font-size:12px">[4]</div>
<div class="t" style="left:323px;top:513px;font-size:11.6px;color:#000">0xcdcdcdcd &lt;不適切な Ptr&gt;</div>
<svg class="a" style="left:910px;top:513px" width="11" height="11" viewBox="0 0 11 11"><defs><radialGradient id="lg" cx="0.4" cy="0.4" r="0.6"><stop offset="0" stop-color="#ffffff"/><stop offset="1" stop-color="#bfe4f8"/></radialGradient></defs><path d="M6.6 6.6 L9.6 9.6" stroke="#3a3a20" stroke-width="2.6" stroke-linecap="round"/><path d="M6.6 6.6 L9.6 9.6" stroke="#e0b840" stroke-width="1.4" stroke-linecap="round"/><circle cx="4.6" cy="4.5" r="3.5" fill="url(#lg)" stroke="#587aa6" stroke-width="1.1"/></svg>
<svg class="a" style="left:926px;top:518px" width="6" height="4" viewBox="0 0 6 4"><path d="M0 0 H6 L3 3.5 Z" fill="#0a0aa0"/></svg>
<div class="t" style="left:938px;top:513px;font-size:11.7px;width:46px;overflow:hidden">wchar_t</div>
<div class="a" style="left:3px;top:527px;width:9px;height:17px;background:#efefef"></div>
<div class="a" style="left:12px;top:544px;width:972px;height:1px;background:#a5a5a5"></div>
<svg class="a" style="left:35px;top:530px" width="9" height="11" viewBox="0 0 9 11"><path d="M4.3 0 L8.6 3 L3.3 7 L0 4 Z" fill="#90c4f4"/><path d="M0 4 L3.3 7 L3.3 11 L0 7.8 Z" fill="#5b9ee2"/><path d="M3.3 7 L8.6 3 L8.6 6.8 L3.3 11 Z" fill="#1041ad"/></svg>
<div class="t" style="left:50px;top:530px;font-size:12px">wordNum</div>
<div class="t" style="left:323px;top:530px;font-size:11.6px;color:#000">1</div>
<div class="t" style="left:938px;top:530px;font-size:11.7px;width:46px;overflow:hidden">int</div>
<div class="a" style="left:3px;top:544px;width:9px;height:17px;background:#efefef"></div>
<div class="a" style="left:12px;top:561px;width:972px;height:1px;background:#a5a5a5"></div>
<svg class="a" style="left:15px;top:548px" width="9" height="9" viewBox="0 0 9 9"><defs><linearGradient id="bg15_548" x1="0" y1="0" x2="0" y2="1"><stop offset="0" stop-color="#ffffff"/><stop offset="1" stop-color="#e2e2e2"/></linearGradient></defs><rect x="0.5" y="0.5" width="8" height="8" rx="1" fill="url(#bg15_548)" stroke="#808080"/><rect x="2" y="4" width="5" height="1" fill="#3a4c9c"/><rect x="4" y="2" width="1" height="5" fill="#3a4c9c"/></svg>
<svg class="a" style="left:35px;top:547px" width="9" height="11" viewBox="0 0 9 11"><path d="M4.3 0 L8.6 3 L3.3 7 L0 4 Z" fill="#90c4f4"/><path d="M0 4 L3.3 7 L3.3 11 L0 7.8 Z" fill="#5b9ee2"/><path d="M3.3 7 L8.6 3 L8.6 6.8 L3.3 11 Z" fill="#1041ad"/></svg>
<div class="t" style="left:50px;top:547px;font-size:12px">stringBuff</div>
<div class="t" style="left:323px;top:547px;font-size:11.6px;color:#000">0x0018f03c &quot;test&quot;</div>
<svg class="a" style="left:910px;top:547px" width="11" height="11" viewBox="0 0 11 11"><defs><radialGradient id="lg" cx="0.4" cy="0.4" r="0.6"><stop offset="0" stop-color="#ffffff"/><stop offset="1" stop-color="#bfe4f8"/></radialGradient></defs><path d="M6.6 6.6 L9.6 9.6" stroke="#3a3a20" stroke-width="2.6" stroke-linecap="round"/><path d="M6.6 6.6 L9.6 9.6" stroke="#e0b840" stroke-width="1.4" stroke-linecap="round"/><circle cx="4.6" cy="4.5" r="3.5" fill="url(#lg)" stroke="#587aa6" stroke-width="1.1"/></svg>
<svg class="a" style="left:926px;top:552px" width="6" height="4" viewBox="0 0 6 4"><path d="M0 0 H6 L3 3.5 Z" fill="#0a0aa0"/></svg>
<div class="t" style="left:938px;top:547px;font-size:11.7px;width:46px;overflow:hidden">wchar_t</div>
<div class="a" style="left:11px;top:561px;width:1px;height:17px;background:#a5a5a5"></div>
<div class="a" style="left:318px;top:340px;width:1px;height:238px;background:#a5a5a5"></div>
<div class="a" style="left:933px;top:340px;width:1px;height:238px;background:#a5a5a5"></div>
<div class="a" style="left:984px;top:316px;width:17px;height:263px;background:#eaeaea"></div>
<svg class="a" style="left:989px;top:324px" width="8" height="4" viewBox="0 0 8 4"><path d="M4 0 L8 4 H0 Z" fill="#555"/></svg>
<svg class="a" style="left:989px;top:567px" width="8" height="4" viewBox="0 0 8 4"><path d="M0 0 H8 L4 4 Z" fill="#555"/></svg>
<div class="a" style="left:985px;top:350px;width:15px;height:209px;border:1px solid #9a9a9a;border-radius:2px;background:linear-gradient(90deg,#f7f7f7,#d8d8d8)"></div>
<div class="a" style="left:989px;top:450px;width:7px;height:7px;background:repeating-linear-gradient(#555 0 1px,transparent 1px 2px)"></div>
<div class="a" style="left:1009px;top:294px;width:82px;height:22px;border-radius:2px 2px 0 0;background:linear-gradient(#52658a 0%,#4a5d81 40%,#42557a 95%,#3a4c70 100%)"></div>
<div class="t" style="left:1011px;top:298px;font-size:12px;color:#fff">呼<span style="font-size:9px;color:#ccd">…</span></div>
<svg class="a" style="left:1040px;top:303px" width="8" height="4" viewBox="0 0 8 4"><path d="M0 0 H8 L4 4 Z" fill="#dde2ea"/></svg>
<svg class="a" style="left:1058px;top:299px" width="8" height="11" viewBox="0 0 8 11"><path d="M2.5 0.5 H6 V6 M2.5 0.5 V6" fill="none" stroke="#e8ecf2" stroke-width="1"/><rect x="4.6" y="0.5" width="1.4" height="5.5" fill="#e8ecf2"/><rect x="0.5" y="6" width="7" height="1" fill="#e8ecf2"/><rect x="3.5" y="7" width="1" height="4" fill="#e8ecf2"/></svg>
<svg class="a" style="left:1075px;top:301px" width="10" height="8" viewBox="0 0 10 8"><path d="M0.6 0.3 L9.4 7.7 M9.4 0.3 L0.6 7.7" stroke="#eef1f5" stroke-width="1.4"/></svg>
<div class="a" style="left:1009px;top:316px;width:82px;height:264px;background:#fff"></div>
<div class="a" style="left:1009px;top:317px;width:64px;height:23px;background:#efefef;border-bottom:1px solid #a5a5a5"></div>
<div class="a" style="left:1025px;top:318px;width:1px;height:21px;background:#a5a5a5"></div>
<div class="a" style="left:1042px;top:318px;width:1px;height:21px;background:#a5a5a5"></div>
<div class="t" style="left:1031px;top:321px;font-size:12px;width:11px;overflow:hidden">名前</div>
<div class="t" style="left:1047px;top:321px;font-size:12px">言語</div>
<div class="a" style="left:1009px;top:357px;width:64px;height:1px;background:#a5a5a5"></div>
<div class="t" style="left:1031px;top:343px;font-size:12px;width:11px;overflow:hidden;color:#000">de</div>
<div class="t" style="left:1047px;top:343px;font-size:12px">C++</div>
<div class="a" style="left:1009px;top:374px;width:64px;height:1px;background:#a5a5a5"></div>
<div class="t" style="left:1031px;top:360px;font-size:12px;width:11px;overflow:hidden;color:#000">de</div>
<div class="t" style="left:1047px;top:360px;font-size:12px">C++</div>
<div class="a" style="left:1009px;top:391px;width:64px;height:1px;background:#a5a5a5"></div>
<div class="t" style="left:1031px;top:377px;font-size:12px;width:11px;overflow:hidden;color:#6e6e6e">us</div>
<div class="a" style="left:1009px;top:408px;width:64px;height:1px;background:#a5a5a5"></div>
<div class="t" style="left:1031px;top:394px;font-size:12px;width:11px;overflow:hidden;color:#6e6e6e">[下</div>
<div class="a" style="left:1009px;top:425px;width:64px;height:1px;background:#a5a5a5"></div>
<div class="t" style="left:1031px;top:411px;font-size:12px;width:11px;overflow:hidden;color:#6e6e6e">us</div>
<div class="a" style="left:1009px;top:442px;width:64px;height:1px;background:#a5a5a5"></div>
<div class="t" style="left:1031px;top:428px;font-size:12px;width:11px;overflow:hidden;color:#6e6e6e">us</div>
<div class="a" style="left:1009px;top:459px;width:64px;height:1px;background:#a5a5a5"></div>
<div class="t" style="left:1031px;top:445px;font-size:12px;width:11px;overflow:hidden;color:#6e6e6e">us</div>
<div class="a" style="left:1009px;top:476px;width:64px;height:1px;background:#a5a5a5"></div>
<div class="t" style="left:1031px;top:462px;font-size:12px;width:11px;overflow:hidden;color:#6e6e6e">us</div>
<div class="a" style="left:1009px;top:493px;width:64px;height:1px;background:#a5a5a5"></div>
<div class="t" style="left:1031px;top:479px;font-size:12px;width:11px;overflow:hidden;color:#6e6e6e">nt</div>
<div class="a" style="left:1009px;top:510px;width:64px;height:1px;background:#a5a5a5"></div>
<div class="t" style="left:1031px;top:496px;font-size:12px;width:11px;overflow:hidden;color:#6e6e6e">us</div>
<div class="a" style="left:1009px;top:527px;width:64px;height:1px;background:#a5a5a5"></div>
<div class="t" style="left:1031px;top:513px;font-size:12px;width:11px;overflow:hidden;color:#6e6e6e">us</div>
<div class="a" style="left:1009px;top:544px;width:64px;height:1px;background:#a5a5a5"></div>
<div class="t" style="left:1031px;top:530px;font-size:12px;width:11px;overflow:hidden;color:#6e6e6e">us</div>
<div class="a" style="left:1009px;top:561px;width:64px;height:1px;background:#a5a5a5"></div>
<div class="t" style="left:1031px;top:547px;font-size:12px;width:11px;overflow:hidden;color:#6e6e6e">us</div>
<div class="t" style="left:1031px;top:564px;font-size:12px;width:11px;overflow:hidden;color:#6e6e6e">us</div>
<div class="a" style="left:1025px;top:340px;width:1px;height:239px;background:#a5a5a5"></div>
<div class="a" style="left:1042px;top:340px;width:1px;height:239px;background:#a5a5a5"></div>
<svg class="a" style="left:1011px;top:343px" width="13" height="12" viewBox="0 0 13 12"><defs><linearGradient id="ar2" x1="0" y1="0" x2="0" y2="1"><stop offset="0" stop-color="#fffca0"/><stop offset="1" stop-color="#f2e000"/></linearGradient></defs><path d="M1.2 4.2 H6.6 V2.2 L11.8 6.6 L6.6 11 V8.8 H1.2 Z" fill="url(#ar2)" stroke="#c8b000" stroke-width="0.8" stroke-linejoin="round"/></svg>
<div class="a" style="left:1073px;top:316px;width:17px;height:263px;background:#eaeaea"></div>
<svg class="a" style="left:1078px;top:324px" width="8" height="4" viewBox="0 0 8 4"><path d="M4 0 L8 4 H0 Z" fill="#555"/></svg>
<svg class="a" style="left:1078px;top:567px" width="8" height="4" viewBox="0 0 8 4"><path d="M0 0 H8 L4 4 Z" fill="#555"/></svg>
<div class="a" style="left:1074px;top:336px;width:14px;height:147px;border:1px solid #9a9a9a;border-radius:2px;background:linear-gradient(90deg,#f7f7f7,#d8d8d8)"></div>
<div class="a" style="left:1077px;top:405px;width:7px;height:7px;background:repeating-linear-gradient(#555 0 1px,transparent 1px 2px)"></div>
<svg class="a" style="left:9px;top:584px" width="16" height="16" viewBox="0 0 16 16"><defs><linearGradient id="tg0" x1="0" y1="0" x2="0" y2="1"><stop offset="0" stop-color="#8ab4f6"/><stop offset="1" stop-color="#3f7de2"/></linearGradient></defs><rect x="0" y="0" width="14" height="12.6" fill="#f2f5fb"/><rect x="0" y="0" width="1" height="12.6" fill="#b8c4d8"/><rect x="13" y="2.7" width="1" height="9.9" fill="#c8d2e2"/><rect x="0" y="0" width="14" height="2.7" fill="url(#tg0)"/><rect x="2" y="4" width="3.6" height="0.9" rx="0.4" fill="#2e6ad8"/><rect x="7" y="4" width="2" height="0.9" rx="0.4" fill="#2e6ad8"/><rect x="2" y="6.1" width="2.6" height="0.9" rx="0.4" fill="#2e6ad8"/><rect x="6" y="6.1" width="1.6" height="0.9" rx="0.4" fill="#2e6ad8"/><rect x="1" y="7.3" width="12.5" height="2.4" fill="#46e81a"/><rect x="2" y="8" width="3" height="1" fill="#000"/><rect x="6" y="8" width="2" height="1" fill="#000"/><rect x="2" y="10.5" width="3.6" height="0.9" fill="#2e6ad8"/><path d="M11.2 10 L13.4 12.2 L11.8 14.2 L9.6 12 Z" fill="#d24ad8"/></svg>
<div class="t" style="left:29px;top:585px;font-size:12px;color:#fff">自動変数</div>
<svg class="a" style="left:87px;top:584px" width="16" height="16" viewBox="0 0 16 16"><defs><linearGradient id="tg1" x1="0" y1="0" x2="0" y2="1"><stop offset="0" stop-color="#8ab4f6"/><stop offset="1" stop-color="#3f7de2"/></linearGradient></defs><rect x="0" y="0" width="14" height="12.6" fill="#f2f5fb"/><rect x="0" y="0" width="1" height="12.6" fill="#b8c4d8"/><rect x="13" y="2.7" width="1" height="9.9" fill="#c8d2e2"/><rect x="0" y="0" width="14" height="2.7" fill="url(#tg1)"/><rect x="2" y="4" width="3.6" height="0.9" rx="0.4" fill="#2e6ad8"/><rect x="7" y="4" width="2" height="0.9" rx="0.4" fill="#2e6ad8"/><rect x="2" y="6.1" width="2.6" height="0.9" rx="0.4" fill="#2e6ad8"/><rect x="6" y="6.1" width="1.6" height="0.9" rx="0.4" fill="#2e6ad8"/><rect x="4" y="8" width="1.6" height="0.9" fill="#2e6ad8"/><path d="M1 12.5 L4.5 9.5" stroke="#1a4ab8" stroke-width="2.2"/><path d="M4.5 14.5 L8 12" stroke="#d24ad8" stroke-width="2.2"/><path d="M8.5 11.5 L12 8.5" stroke="#e0a810" stroke-width="2.4"/></svg>
<div class="t" style="left:107px;top:585px;font-size:12px;color:#fff">ローカル</div>
<div class="a" style="left:159px;top:580px;width:89px;height:22px;background:#fff;border-radius:0 0 2px 2px"></div>
<svg class="a" style="left:165px;top:584px" width="16" height="16" viewBox="0 0 16 16"><defs><linearGradient id="tg2" x1="0" y1="0" x2="0" y2="1"><stop offset="0" stop-color="#8ab4f6"/><stop offset="1" stop-color="#3f7de2"/></linearGradient></defs><rect x="0" y="0" width="14" height="12.6" fill="#f2f5fb"/><rect x="0" y="0" width="1" height="12.6" fill="#b8c4d8"/><rect x="13" y="2.7" width="1" height="9.9" fill="#c8d2e2"/><rect x="0" y="0" width="14" height="2.7" fill="url(#tg2)"/><rect x="2" y="4" width="3.6" height="0.9" rx="0.4" fill="#2e6ad8"/><rect x="7" y="4" width="2" height="0.9" rx="0.4" fill="#2e6ad8"/><rect x="2" y="6.1" width="2.6" height="0.9" rx="0.4" fill="#2e6ad8"/><rect x="6" y="6.1" width="1.6" height="0.9" rx="0.4" fill="#2e6ad8"/><rect x="4" y="8" width="1.6" height="0.9" fill="#2e6ad8"/><rect x="10" y="7" width="1" height="4" fill="#111"/><path d="M4 7 L1.5 11" stroke="#111" stroke-width="1"/><rect x="0.3" y="10.8" width="5" height="4" rx="1" fill="#8ab8f0" stroke="#111" stroke-width="1"/><rect x="7" y="10.8" width="5" height="4" rx="1" fill="#8ab8f0" stroke="#111" stroke-width="1"/><rect x="5" y="11.6" width="2" height="1" fill="#111"/></svg>
<div class="t" style="left:185px;top:585px;font-size:12px;color:#000">ウォッチ 1</div>
<div class="a" style="left:1009px;top:580px;width:16px;height:22px;background:#fff;border-radius:0 0 2px 2px"></div>
<svg class="a" style="left:1012px;top:583px" width="10" height="16" viewBox="0 0 10 16"><rect x="3" y="1" width="4" height="9" fill="#fff" stroke="#666"/><path d="M1 10 L5 15 L9 10 Z" fill="#2a6ad0"/></svg>
<div class="a" style="left:1030px;top:583px;width:6px;height:13px;background:linear-gradient(90deg,#fff,#e0e6ee);border-top:2px solid #7aa0e0"></div>
<div class="a" style="left:1048px;top:585px;width:6px;height:12px;background:linear-gradient(90deg,#fff,#e0e6ee);border-top:2px solid #7aa0e0"></div>
<div class="a" style="left:1065px;top:585px;width:6px;height:12px;background:linear-gradient(90deg,#fff,#e0e6ee);border-top:2px solid #7aa0e0"></div>
<div class="a" style="left:1081px;top:585px;width:6px;height:12px;background:linear-gradient(90deg,#fff,#e0e6ee);border-top:2px solid #7aa0e0"></div>
<svg class="a" style="left:1049px;top:589px" width="4" height="5" viewBox="0 0 4 5"><path d="M1 0.5 L3 2.5 L1 4.5" stroke="#000" stroke-width="1.3" fill="none"/></svg>
<svg class="a" style="left:1063px;top:588px" width="5" height="10" viewBox="0 0 5 10"><path d="M2.5 0 L4.5 1 L3.2 6.5 H1.8 L0.5 1 Z" fill="#e02020"/><circle cx="2.5" cy="8.6" r="1.2" fill="#e02020"/></svg>
</body></html>
